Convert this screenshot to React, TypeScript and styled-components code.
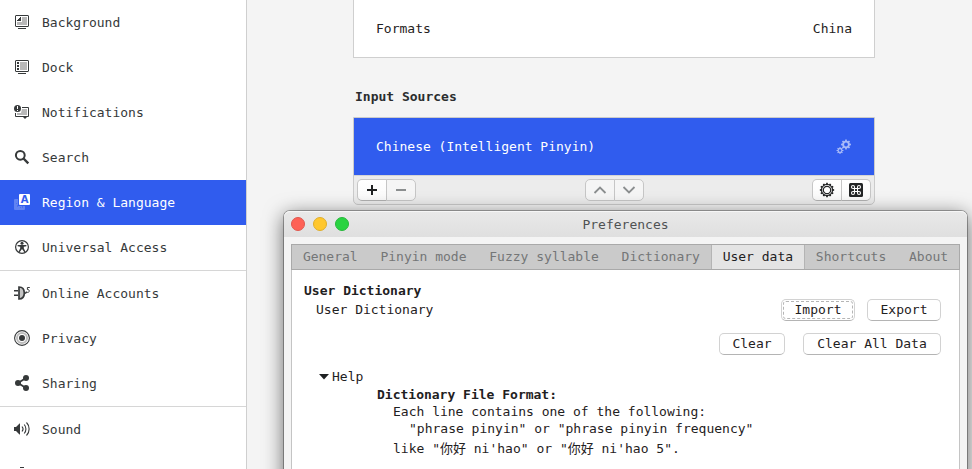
import React from "react";
import styled, { createGlobalStyle, css } from "styled-components";

const BLUE = "#305cee";
const INK = "#36393a";

const GlobalStyle = createGlobalStyle`
  *, *::before, *::after { box-sizing: border-box; }
  body {
    margin: 0;
    overflow: hidden;
    background: #f4f4f4;
    font: 13px/17px "DejaVu Sans Mono", "Noto Sans CJK SC", monospace;
    color: #1f2122;
  }
  button { font: inherit; color: inherit; }
`;

/* ---------- Settings shell ---------- */

const Desktop = styled.div`
  position: relative;
  display: flex;
  height: 100vh;
  overflow: hidden;
`;

const Sidebar = styled.nav`
  flex: 0 0 247px;
  background: #fff;
  border-right: 1px solid #cfcfcf;
  overflow: hidden;
`;

const NavGroup = styled.ul`
  list-style: none;
  margin: 0;
  padding: 0;
  & + & { border-top: 1px solid #d6d6d6; }
`;

const NavLink = styled.a<{ $active?: boolean }>`
  display: flex;
  align-items: flex-start;
  gap: 12px;
  height: 45px;
  padding: 14px;
  text-decoration: none;
  color: ${(p) => (p.$active ? "#fff" : INK)};
  background: ${(p) => (p.$active ? BLUE : "transparent")};
`;

const Icon = styled.svg`
  display: block;
  flex: none;
`;

const Content = styled.main`
  flex: 1;
  min-width: 0;
  padding: 0 97px 0 106px;
`;

const FormatsCard = styled.section`
  display: flex;
  justify-content: space-between;
  height: 58px;
  padding: 20px 22px;
  background: #fff;
  border: 1px solid #cfcfcf;
  border-top: 0;
`;

const SectionTitle = styled.h2`
  margin: 30px 0 12px 2px;
  font-size: 13px;
  line-height: 17px;
  color: #2b2d2e;
`;

const SourcesCard = styled.section`
  border: 1px solid #cbcbcb;
  border-radius: 0 0 5px 5px;
  background: #ececec;
`;

const SourceRow = styled.div`
  display: flex;
  align-items: center;
  justify-content: space-between;
  height: 57px;
  padding: 0 22px;
  color: #fff;
  background: ${BLUE};
`;

const Toolbar = styled.div`
  display: flex;
  justify-content: space-between;
  height: 29px;
  padding: 3px;
  border-top: 1px solid #d4d4d4;
`;

const ButtonGroup = styled.div`
  display: flex;
  height: 22px;
`;

const ToolButton = styled.button`
  display: grid;
  place-items: center;
  width: 30px;
  padding: 0;
  border: 1px solid #c6c6c6;
  border-bottom-color: #b0b0b0;
  background: linear-gradient(#fff, #fafafa);
  &:first-child { border-radius: 5px 0 0 5px; }
  &:last-child { border-radius: 0 5px 5px 0; margin-left: -1px; }
  &:disabled {
    background: #f5f5f5;
    border-bottom-color: #c6c6c6;
    color: #8b8e8f;
  }
`;

/* ---------- Preferences window ---------- */

const Window = styled.section`
  position: absolute;
  top: 211px;
  left: 284px;
  right: 5px;
  min-height: 320px;
  padding-bottom: 7px;
  background: #f4f4f4;
  border-radius: 6px 6px 0 0;
  box-shadow: 0 0 0 1px rgba(0, 0, 0, 0.3), 0 4px 20px rgba(0, 0, 0, 0.6);
`;

const TitleBar = styled.header`
  display: grid;
  grid-template-columns: 1fr auto 1fr;
  align-items: center;
  height: 26px;
  padding: 0 7px;
  border-radius: 6px 6px 0 0;
  background: linear-gradient(#e9e9e9, #dfdfdf);
  box-shadow: inset 0 1px #f6f6f6;
  color: #4f5253;
`;

const Lights = styled.div`
  display: flex;
  gap: 8px;
`;

const Light = styled.button<{ $color: string; $edge: string }>`
  width: 14px;
  height: 14px;
  padding: 0;
  border: 1px solid ${(p) => p.$edge};
  border-radius: 50%;
  background: ${(p) => p.$color};
`;

const Title = styled.h1`
  margin: 0;
  font-size: 13px;
  font-weight: 400;
`;

const Notebook = styled.div`
  margin: 7px 7px 0;
  border: 1px solid #c4c4c4;
  background: #fff;
`;

const Tabs = styled.div`
  display: flex;
  gap: 1px;
  height: 26px;
  margin: -1px -1px 0;
  padding: 1px;
  background: #cacaca;
  border: 0 solid #a9a9a9;
  box-shadow: inset 0 0 0 1px #a9a9a9;
`;

const Tab = styled.button<{ $active?: boolean }>`
  flex: 1 1 auto;
  padding: 0 10px 2px;
  border: 0;
  white-space: nowrap;
  background: transparent;
  color: #747677;
  ${(p) =>
    p.$active &&
    css`
      background: #e4e4e4;
      color: #1f2122;
      box-shadow: -1px 0 #b4b4b4, 1px 0 #b4b4b4;
    `}
`;

const Panel = styled.div`
  padding: 12px 18px 40px 12px;
`;

const PanelTitle = styled.h2`
  margin: 0;
  font-size: 13px;
  line-height: 17px;
`;

const DictionaryRow = styled.div`
  display: flex;
  justify-content: space-between;
  padding-left: 12px;
`;

const RowLabel = styled.span`
  padding-top: 2px;
`;

const Actions = styled.div<{ $gap: number }>`
  display: flex;
  justify-content: flex-end;
  gap: ${(p) => p.$gap}px;
`;

const ClearActions = styled(Actions)`
  margin-top: 12px;
`;

const PushButton = styled.button<{ $minWidth: number; $focused?: boolean }>`
  min-width: ${(p) => p.$minWidth}px;
  height: 22px;
  padding: 0 12px;
  border: 1px solid #d2d2d2;
  border-bottom-color: #b4b4b4;
  border-radius: 5px;
  background: #fff;
  line-height: 20px;
  ${(p) =>
    p.$focused &&
    css`
      outline: 1px dashed #b5b5b5;
      outline-offset: -3px;
    `}
`;

const Help = styled.details`
  margin-top: 13px;
  padding-left: 27px;
`;

const HelpSummary = styled.summary`
  display: flex;
  align-items: center;
  gap: 3px;
  margin-left: -12px;
  list-style: none;
`;

const HelpText = styled.div`
  padding: 1px 0 0 46px;
`;

const HelpLine = styled.p<{ $level: number }>`
  margin: 0;
  padding-left: ${(p) => p.$level * 16}px;
`;

const ExampleLine = styled(HelpLine)`
  padding-top: 3px;
`;

/* ---------- Sidebar icons ---------- */

const glyphs: Record<string, React.ReactNode> = {
  background: (
    <>
      <rect x="1.5" y="1.5" width="13" height="11" rx=".5" fill="#fff" stroke={INK} />
      <path d="M8 3h5v8H3V8h5z" fill="#b8b8b8" />
      <path d="M7 3v4H3V6h1V5h1V4h1V3z" fill={INK} />
      <path d="M4 14h8v1H4z" fill={INK} />
    </>
  ),
  dock: (
    <>
      <rect x="1.5" y="1.5" width="13" height="11" rx=".5" fill="#fff" stroke={INK} />
      <path d="M6 3h7v8H6z" fill="#b8b8b8" />
      <path d="M3 3h2v2H3zM3 6h2v2H3zM3 9h2v2H3zM4 14h8v1H4z" fill={INK} />
    </>
  ),
  notifications: (
    <>
      <path d="M8 5h5v6H3V9h4z" fill="#b8b8b8" />
      <path d="M8 3.5h6.5v9h-13V9" fill="none" stroke={INK} />
      <path d="M9 13h4l-2 2z" fill={INK} />
      <circle cx="3.5" cy="4.5" r="3.5" fill={INK} />
      <path d="M3 2h1v3H3zM3 6h1v1H3z" fill="#fff" />
    </>
  ),
  search: (
    <>
      <circle cx="6.3" cy="6.3" r="4.4" fill="none" stroke={INK} strokeWidth="2" />
      <path d="M9.5 9.5l4.8 4.8" stroke={INK} strokeWidth="2.4" />
    </>
  ),
  region: (
    <>
      <path d="M1 5h3v7h7v3a1 1 0 0 1-1 1H1a1 1 0 0 1-1-1V6a1 1 0 0 1 1-1z" fill="#fff" opacity=".24" />
      <path d="M2 9h1v1H2zM3 11h1v2H3zM6 13h1v1H6zM8 12h1v2H8z" fill={BLUE} opacity=".5" />
      <rect x="5" y="0" width="11" height="11" rx="1" fill="#fff" />
      <text x="10.5" y="9" textAnchor="middle" fontFamily="DejaVu Sans" fontWeight="700" fontSize="10" fill={BLUE}>A</text>
    </>
  ),
  access: (
    <>
      <circle cx="8" cy="8" r="6.4" fill="none" stroke={INK} strokeWidth="1.2" />
      <circle cx="8" cy="4.2" r="1.5" fill={INK} />
      <path d="M3.6 6h8.800v1.200L9.800 7.700v1.500l1.700 3.500-1.100.6L8 10l-2.400 3.300-1.100-.6 1.700-3.500V7.700L3.600 7.200z" fill={INK} />
    </>
  ),
  accounts: (
    <>
      <path d="M0 5h4v1.500H0zM0 9.500h4V11H0z" fill={INK} />
      <path d="M5 2c3.500 0 5.300 2.300 5.300 6S8.500 14 5 14z" fill="#c4c4c4" stroke={INK} strokeWidth="1.7" />
      <path d="M10.500 8.200c1.300 0 2-.6 2-1.700" fill="none" stroke={INK} strokeWidth="1.4" />
      <path d="M15.800 2.500h-2.400v2c1.500 0 2.100.6 1.700 2-.2.800-.9 1.100-1.800 1" fill="none" stroke={INK} />
    </>
  ),
  privacy: (
    <>
      <circle cx="8" cy="8" r="7.4" fill="#fff" stroke={INK} strokeWidth="1.1" />
      <circle cx="8" cy="8" r="5" fill="none" stroke="#bcbcbc" strokeWidth="2" />
      <circle cx="8" cy="8" r="3" fill={INK} />
    </>
  ),
  sharing: (
    <>
      <path d="M12 3L4 8l8 5" fill="none" stroke={INK} strokeWidth="1.8" />
      <circle cx="12" cy="3" r="3" fill={INK} />
      <circle cx="4" cy="8" r="3" fill={INK} />
      <circle cx="12" cy="13" r="3" fill={INK} />
    </>
  ),
  sound: (
    <>
      <path d="M0 6h2l3.500-3.500H6v11h-.5L2 10H0z" fill={INK} />
      <path
        d="M8 5.500c1.300 1.500 1.300 3.500 0 5M10.200 3.500c2.300 2.500 2.300 6.500 0 9M12.500 1.500c3.500 3.500 3.500 9.500 0 13"
        fill="none"
        stroke={INK}
        strokeWidth="1.1"
      />
    </>
  ),
  power: (
    <>
      <path d="M6 1h4v1H6z" fill={INK} />
      <rect x="4.5" y="3.5" width="7" height="11" fill="#b8b8b8" stroke={INK} />
    </>
  ),
};

const Glyph = ({ name }: { name: string }) => (
  <Icon width="16" height="16" viewBox="0 0 16 16" aria-hidden="true">
    {glyphs[name]}
  </Icon>
);

const navigation = [
  [
    ["background", "Background"],
    ["dock", "Dock"],
    ["notifications", "Notifications"],
    ["search", "Search"],
    ["region", "Region & Language"],
    ["access", "Universal Access"],
  ],
  [
    ["accounts", "Online Accounts"],
    ["privacy", "Privacy"],
    ["sharing", "Sharing"],
  ],
  [
    ["sound", "Sound"],
    ["power", ""],
  ],
];

const tabs = ["General", "Pinyin mode", "Fuzzy syllable", "Dictionary", "User data", "Shortcuts", "About"];

/* Cog outline: each tooth goes root, tip, tip, root around the centre. */
const cog = (cx: number, cy: number, outer: number, inner: number, teeth: number) => {
  const step = (Math.PI * 2) / teeth;
  const points: string[] = [];
  for (let i = 0; i < teeth; i++) {
    [[-0.3, inner], [-0.2, outer], [0.2, outer], [0.3, inner]].forEach(([offset, radius]) => {
      const angle = (i + offset) * step;
      points.push(`${(cx + radius * Math.sin(angle)).toFixed(2)} ${(cy - radius * Math.cos(angle)).toFixed(2)}`);
    });
  }
  return `M${points.join("L")}Z`;
};

const GearsIcon = () => (
  <Icon width="16" height="16" viewBox="0 0 16 16" role="img" aria-label="Input source options">
    <g fill="#a9bbf8">
      <path d={cog(10, 5.5, 5, 3.8, 8)} />
      <path d={cog(4, 11.5, 3.5, 2.5, 8)} />
    </g>
    <circle cx="10" cy="5.5" r="1.9" fill={BLUE} />
    <circle cx="4" cy="11.5" r="1.2" fill={BLUE} />
  </Icon>
);

const ToolIcon = ({ children }: { children: React.ReactNode }) => (
  <Icon width="16" height="16" viewBox="0 0 16 16" aria-hidden="true">
    {children}
  </Icon>
);

export default function App() {
  return (
    <>
      <GlobalStyle />
      <Desktop>
        <Sidebar aria-label="Settings">
          {navigation.map((group, i) => (
            <NavGroup key={i}>
              {group.map(([icon, label]) => (
                <li key={icon}>
                  <NavLink
                    href={`#${icon}`}
                    $active={icon === "region"}
                    aria-label={label || icon}
                    aria-current={icon === "region" ? "page" : undefined}
                  >
                    <Glyph name={icon} />
                    {label}
                  </NavLink>
                </li>
              ))}
            </NavGroup>
          ))}
        </Sidebar>

        <Content>
          <FormatsCard>
            <span>Formats</span>
            <span>China</span>
          </FormatsCard>
          <SectionTitle>Input Sources</SectionTitle>
          <SourcesCard>
            <SourceRow>
              <span>Chinese (Intelligent Pinyin)</span>
              <GearsIcon />
            </SourceRow>
            <Toolbar>
              <ButtonGroup>
                <ToolButton aria-label="Add input source">
                  <ToolIcon><path d="M3 7h4V3h2v4h4v2H9v4H7V9H3z" fill="#1f2122" /></ToolIcon>
                </ToolButton>
                <ToolButton aria-label="Remove input source" disabled>
                  <ToolIcon><path d="M3 7h10v2H3z" fill="currentColor" /></ToolIcon>
                </ToolButton>
              </ButtonGroup>
              <ButtonGroup>
                <ToolButton aria-label="Move up" disabled>
                  <ToolIcon><path d="M2.5 11L8 5.500l5.500 5.500" fill="none" stroke="currentColor" strokeWidth="1.8" /></ToolIcon>
                </ToolButton>
                <ToolButton aria-label="Move down" disabled>
                  <ToolIcon><path d="M2.5 5L8 10.500l5.500-5.500" fill="none" stroke="currentColor" strokeWidth="1.8" /></ToolIcon>
                </ToolButton>
              </ButtonGroup>
              <ButtonGroup>
                <ToolButton aria-label="Input source settings">
                  <ToolIcon>
                    <path d={cog(8, 8, 7.2, 6.1, 12)} fill="#232526" />
                    <circle cx="8" cy="8" r="4.9" fill="#fff" />
                    <circle cx="8" cy="8" r="3.7" fill="none" stroke="#232526" strokeWidth="1.2" />
                  </ToolIcon>
                </ToolButton>
                <ToolButton aria-label="Keyboard shortcuts">
                  <ToolIcon>
                    <rect x="1" y="1" width="14" height="14" rx="1.5" fill="#232526" />
                    <path
                      d="M6.500 6.500h3v3h-3zM6.500 6.500h-1.500a1.500 1.500 0 1 1 1.500-1.500zM9.500 6.500v-1.500a1.500 1.500 0 1 1 1.500 1.500zM9.500 9.500h1.500a1.500 1.500 0 1 1-1.500 1.500zM6.500 9.500v1.500a1.500 1.500 0 1 1-1.500-1.500z"
                      fill="none"
                      stroke="#fff"
                      strokeWidth="1.1"
                    />
                  </ToolIcon>
                </ToolButton>
              </ButtonGroup>
            </Toolbar>
          </SourcesCard>
        </Content>

        <Window role="dialog" aria-labelledby="preferences-title">
          <TitleBar>
            <Lights>
              <Light $color="#fe6156" $edge="#e0574e" aria-label="Close" />
              <Light $color="#ffc72e" $edge="#dfae2a" aria-label="Minimize" />
              <Light $color="#29d341" $edge="#27b83b" aria-label="Maximize" />
            </Lights>
            <Title id="preferences-title">Preferences</Title>
          </TitleBar>
          <Notebook>
            <Tabs role="tablist">
              {tabs.map((name) => (
                <Tab key={name} role="tab" aria-selected={name === "User data"} $active={name === "User data"}>
                  {name}
                </Tab>
              ))}
            </Tabs>
            <Panel role="tabpanel">
              <PanelTitle>User Dictionary</PanelTitle>
              <DictionaryRow>
                <RowLabel>User Dictionary</RowLabel>
                <Actions $gap={12}>
                  <PushButton $minWidth={74} $focused>Import</PushButton>
                  <PushButton $minWidth={74}>Export</PushButton>
                </Actions>
              </DictionaryRow>
              <ClearActions $gap={18}>
                <PushButton $minWidth={66}>Clear</PushButton>
                <PushButton $minWidth={138}>Clear All Data</PushButton>
              </ClearActions>
              <Help open>
                <HelpSummary>
                  <Icon width="10" height="6" viewBox="0 0 10 6" aria-hidden="true">
                    <path d="M0 0h10L5 5.500z" fill="#1f2122" />
                  </Icon>
                  Help
                </HelpSummary>
                <HelpText>
                  <HelpLine $level={0}><strong>Dictionary File Format:</strong></HelpLine>
                  <HelpLine $level={1}>Each line contains one of the following:</HelpLine>
                  <HelpLine $level={2}>"phrase pinyin" or "phrase pinyin frequency"</HelpLine>
                  <ExampleLine $level={1}>like "你好 ni'hao" or "你好 ni'hao 5".</ExampleLine>
                </HelpText>
              </Help>
            </Panel>
          </Notebook>
        </Window>
      </Desktop>
    </>
  );
}
